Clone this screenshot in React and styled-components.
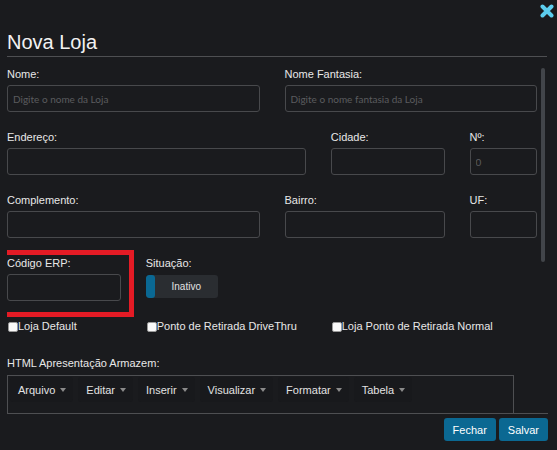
import React from 'react'
import styled, { createGlobalStyle, css } from 'styled-components'

const GlobalStyle = createGlobalStyle`
  html, body {
    margin: 0;
    background: #1a1b1e;
    overflow: hidden;
  }
  body {
    font-family: "Liberation Sans", Arial, sans-serif;
    color: #e8e8e8;
  }
`

const Page = styled.div`
  display: flex;
  flex-direction: column;
  width: 557px;
  height: 450px;
  background: #1a1b1e;
`

const CloseRow = styled.div`
  display: flex;
  justify-content: flex-end;
  padding: 4px 3px 0 0;
  height: 14px;
`

const CloseButton = styled.button`
  width: 14px;
  height: 14px;
  padding: 0;
  border: none;
  background: none;
  cursor: pointer;
  display: block;
`

const Modal = styled.div`
  width: 540px;
  margin-left: 7px;
  display: flex;
  flex-direction: column;
`

const Title = styled.h1`
  margin: 12px 0 0;
  font-size: 20px;
  line-height: 24px;
  font-weight: 400;
  color: #f2f2f2;
  padding-bottom: 2px;
  border-bottom: 1px solid #4e4f52;
`

const Body = styled.div`
  display: flex;
  align-items: flex-start;
  height: 356px;
  overflow: hidden;
  padding-top: 11px;
  box-sizing: border-box;
`

// scrollbar thumb of the modal body
const ScrollThumb = styled.div`
  flex: 0 0 4px;
  margin-left: 4px;
  height: 194px;
  border-radius: 2px;
  background: #42454a;
`

const Grid = styled.div`
  flex: 0 0 530px;
  display: grid;
  grid-template-columns: repeat(12, minmax(0, 1fr));
  column-gap: 25px;
  align-content: start;
`

const Field = styled.div`
  grid-column: span ${({ $span }) => $span};
  display: flex;
  flex-direction: column;
  align-items: flex-start;
  gap: 4px;
  margin-bottom: 19px;
  position: relative;

  ${({ $marked }) =>
    $marked &&
    css`
      &::after {
        content: '';
        position: absolute;
        left: -6px;
        top: -7px;
        right: -13px;
        bottom: -16px;
        border: 5px solid #e41b25;
        pointer-events: none;
      }
    `}
`

const Label = styled.label`
  font-size: 11px;
  line-height: 13px;
  color: #e8e8e8;
`

const Input = styled.input`
  box-sizing: border-box;
  width: 100%;
  height: 27px;
  margin: 0;
  padding: 0 5px;
  background: #1a1b1e;
  border: 1px solid #48494c;
  border-radius: 3px;
  color: #ddd;
  font-family: Lato, "Liberation Sans", sans-serif;
  font-size: 10px;
  outline: none;

  &::placeholder {
    color: #5a5b5e;
  }
`

const Toggle = styled.div`
  display: flex;
  width: 72px;
  height: 23px;
  border-radius: 3px;
  background: #2a2d31;
  overflow: hidden;
  margin-top: 1px;
`

const Knob = styled.span`
  width: 9px;
  border-radius: 3px;
  background: #0a6893;
`

const ToggleText = styled.span`
  flex: 1;
  display: flex;
  align-items: center;
  justify-content: center;
  font-size: 10px;
  color: #e2e2e2;
`

const CheckLabel = styled.label`
  grid-column: span ${({ $span }) => $span};
  display: flex;
  align-items: center;
  font-size: 11px;
  line-height: 13px;
  color: #e8e8e8;
  margin-bottom: 24px;
  white-space: nowrap;
`

const Check = styled.input.attrs({ type: 'checkbox' })`
  appearance: none;
  width: 10px;
  height: 10px;
  margin: 0 0 0 1px;
  background: #fafafa;
  border: 1px solid #9a9a9a;
  border-radius: 2px;
  box-sizing: border-box;
`

const Section = styled.div`
  grid-column: span 12;
  display: flex;
  flex-direction: column;
  gap: 5px;
`

const Editor = styled.div`
  width: 507px;
  height: 60px;
  box-sizing: border-box;
  border: 1px solid #4e4f52;
  padding: 1px 2px;
`

const MenuBar = styled.div`
  display: flex;
  gap: 5px;
`

const MenuItem = styled.button`
  display: flex;
  align-items: center;
  gap: 5px;
  height: 25px;
  padding: 0 7px 0 8px;
  border: none;
  border-radius: 3px;
  background: #18191c;
  color: #e2e2e2;
  font-family: "Liberation Sans", Arial, sans-serif;
  font-size: 11px;
  cursor: pointer;
`

const Caret = styled.span`
  width: 0;
  height: 0;
  border-left: 3px solid transparent;
  border-right: 3px solid transparent;
  border-top: 4px solid #8a8a8a;
`

const Footer = styled.div`
  display: flex;
  justify-content: flex-end;
  gap: 3px;
  padding-top: 4px;
  border-top: 1px solid #4e4f52;
  margin-right: -1px;
`

const Button = styled.button`
  height: 23px;
  padding: 0 9px;
  border: none;
  border-radius: 3px;
  background: #0b6892;
  color: #fff;
  font-family: "Liberation Sans", Arial, sans-serif;
  font-size: 11px;
  cursor: pointer;
`

const menus = ['Arquivo', 'Editar', 'Inserir', 'Visualizar', 'Formatar', 'Tabela']

export default function App() {
  return (
    <Page>
      <GlobalStyle />
      <CloseRow>
        <CloseButton aria-label="Fechar">
          <svg width="14" height="14" viewBox="0 0 14 14">
            <path d="M2.5 2.5 L11.5 11.5 M11.5 2.5 L2.5 11.5" stroke="#5ccdee" strokeWidth="4" strokeLinecap="round" />
          </svg>
        </CloseButton>
      </CloseRow>
      <Modal>
        <Title>Nova Loja</Title>
        <Body>
          <Grid>
            <Field $span={6}>
              <Label>Nome:</Label>
              <Input placeholder="Digite o nome da Loja" />
            </Field>
            <Field $span={6}>
              <Label>Nome Fantasia:</Label>
              <Input placeholder="Digite o nome fantasia da Loja" />
            </Field>

            <Field $span={7}>
              <Label>Endereço:</Label>
              <Input />
            </Field>
            <Field $span={3}>
              <Label>Cidade:</Label>
              <Input />
            </Field>
            <Field $span={2}>
              <Label>Nº:</Label>
              <Input placeholder="0" />
            </Field>

            <Field $span={6}>
              <Label>Complemento:</Label>
              <Input />
            </Field>
            <Field $span={4}>
              <Label>Bairro:</Label>
              <Input />
            </Field>
            <Field $span={2}>
              <Label>UF:</Label>
              <Input />
            </Field>

            <Field $span={3} $marked>
              <Label>Código ERP:</Label>
              <Input />
            </Field>
            <Field $span={9}>
              <Label>Situação:</Label>
              <Toggle>
                <Knob />
                <ToggleText>Inativo</ToggleText>
              </Toggle>
            </Field>

            <CheckLabel $span={3}><Check />Loja Default</CheckLabel>
            <CheckLabel $span={4}><Check />Ponto de Retirada DriveThru</CheckLabel>
            <CheckLabel $span={5}><Check />Loja Ponto de Retirada Normal</CheckLabel>

            <Section>
              <Label>HTML Apresentação Armazem:</Label>
              <Editor>
                <MenuBar>
                  {menus.map((m) => (
                    <MenuItem key={m}>
                      {m}
                      <Caret />
                    </MenuItem>
                  ))}
                </MenuBar>
              </Editor>
            </Section>
          </Grid>
          <ScrollThumb />
        </Body>
        <Footer>
          <Button>Fechar</Button>
          <Button>Salvar</Button>
        </Footer>
      </Modal>
    </Page>
  )
}
